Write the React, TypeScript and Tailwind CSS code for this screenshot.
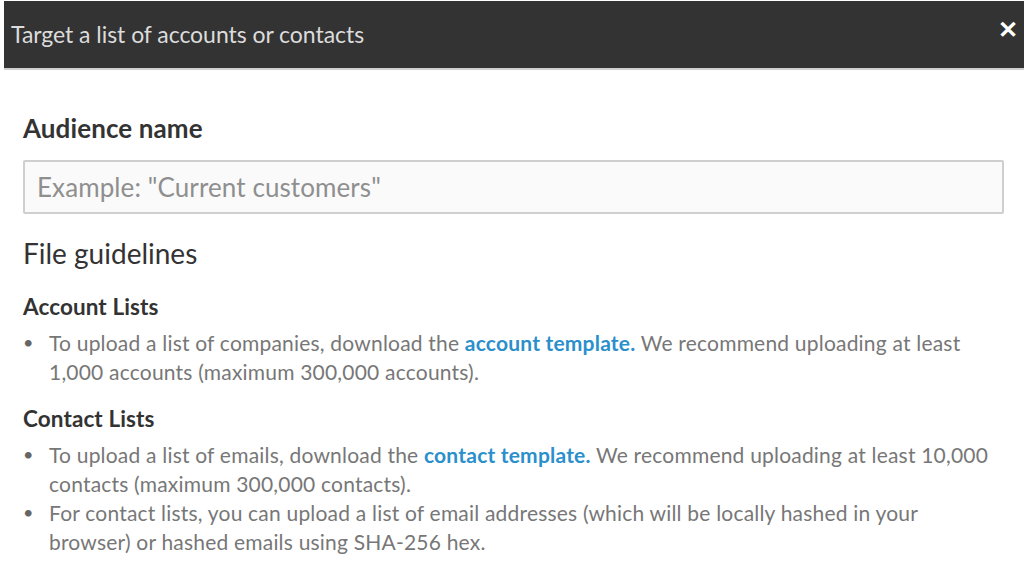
import React from "react";

export default function App() {
  const font = { fontFamily: "Lato, 'Noto Sans', sans-serif" };
  return (
    <div className="w-[1024px] h-[576px] bg-white overflow-hidden" style={font}>
      <div className="ml-[4px] mt-[1px] h-[67px] bg-[#333333] flex items-center justify-between pl-[7px] pr-[6px] border-b-2 border-[#d0d0d0] box-content">
        <div className="text-[23px] text-[#dcdcdc] tracking-[-0.05px] mb-[1px]">Target a list of accounts or contacts</div>
        <div className="text-white text-[24px] font-bold leading-none mb-[12px]">✕</div>
      </div>
      <div className="pl-[23px] pr-[20px]">
        <div className="mt-[41px] text-[26px] font-bold text-[#333] leading-[34px] tracking-[0.1px]">Audience name</div>
        <div className="mt-[15px] h-[54px] border-2 border-[#cfcfcf] rounded-[2px] bg-[#fafafa] flex items-center pl-[12px] text-[26px] text-[#8f8f8f] tracking-[0.1px]">
          Example: "Current customers"
        </div>
        <div className="mt-[21px] text-[28px] text-[#333] leading-[36px]">File guidelines</div>
        <div className="mt-[21px] text-[22.5px] font-bold text-[#333] leading-[30px] tracking-[0.1px]">Account Lists</div>
        <ul className="mt-[6px] text-[21px] text-[#777] leading-[29px] tracking-[0.2px] whitespace-nowrap">
          <li className="flex">
            <span className="w-[26px] shrink-0 text-[#666] text-[18px]">•</span>
            <span>
              To upload a list of companies, download the{" "}
              <span className="font-bold text-[#2b8fcc]">account template.</span> We recommend uploading at least
              <br />
              1,000 accounts (maximum 300,000 accounts).
            </span>
          </li>
        </ul>
        <div className="mt-[18px] text-[22.5px] font-bold text-[#333] leading-[30px] tracking-[0.1px]">Contact Lists</div>
        <ul className="mt-[6px] text-[21px] text-[#777] leading-[29px] tracking-[0.2px] whitespace-nowrap">
          <li className="flex">
            <span className="w-[26px] shrink-0 text-[#666] text-[18px]">•</span>
            <span>
              To upload a list of emails, download the{" "}
              <span className="font-bold text-[#2b8fcc]">contact template.</span> We recommend uploading at least 10,000
              <br />
              contacts (maximum 300,000 contacts).
            </span>
          </li>
          <li className="flex">
            <span className="w-[26px] shrink-0 text-[#666] text-[18px]">•</span>
            <span>
              For contact lists, you can upload a list of email addresses (which will be locally hashed in your
              <br />
              browser) or hashed emails using SHA-256 hex.
            </span>
          </li>
        </ul>
      </div>
    </div>
  );
}
